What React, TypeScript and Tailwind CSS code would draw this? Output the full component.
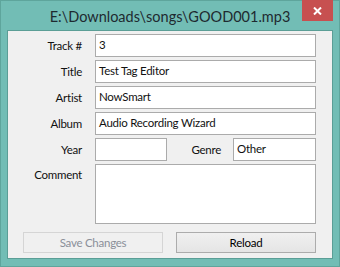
import React from 'react';

const FONT = "font-['Lato',sans-serif]";

function Field({ label, value, tall }: { label: string; value?: string; tall?: boolean }) {
  return (
    <div className="flex">
      <div className={`w-[74px] text-right ${tall ? 'pt-[2px]' : 'leading-[23px]'}`}>{label}</div>
      <div
        className={`ml-[13px] w-[221px] border border-[#ababab] bg-white pl-[3px] ${tall ? 'h-[60px]' : 'h-[23px] leading-[20px]'}`}
      >
        {value}
      </div>
    </div>
  );
}

export default function App() {
  return (
    <div className={`${FONT} relative w-[340px] h-[267px] border border-[#5ea59c] bg-[#72bdb5] px-[6px] text-[11.5px] tracking-[-0.25px] text-[#111]`}>
      <div className="h-[29px] flex items-center justify-center text-[14.5px] tracking-normal text-[#1e2a30] pt-[2px] -mx-[6px]">
        E:\Downloads\songs\GOOD001.mp3
      </div>
      <div className="absolute top-[-1px] right-[6px] w-[31px] h-[21px] bg-[#c75050] flex items-center justify-center">
        <svg width="9" height="8" viewBox="0 0 9 8">
          <path d="M1 0.5 L8 7.5 M8 0.5 L1 7.5" stroke="white" strokeWidth="2" />
        </svg>
      </div>
      <div className="h-[229px] border border-[#5b9e96] bg-[#f0f0f0] pt-[3px] flex flex-col">
        <div className="flex flex-col gap-[3px]">
          <Field label="Track #" value="3" />
          <Field label="Title" value="Test Tag Editor" />
          <Field label="Artist" value="NowSmart" />
          <Field label="Album" value="Audio Recording Wizard" />
          <div className="flex">
            <div className="w-[74px] text-right leading-[23px]">Year</div>
            <div className="ml-[13px] w-[72px] h-[23px] border border-[#ababab] bg-white" />
            <div className="flex-1 text-right pr-[12px] leading-[23px]">Genre</div>
            <div className="w-[83px] h-[23px] border border-[#ababab] bg-white pl-[3px] leading-[20px] mr-[16px]">Other</div>
          </div>
          <Field label="Comment" tall />
        </div>
        <div className="flex gap-[13px] pl-[15px] mt-[8px]">
          <button className="w-[140px] h-[21px] border border-[#d5d5d5] bg-[#f0f0f0] text-[#8a8f99] leading-[18px]">
            Save Changes
          </button>
          <button className="w-[140px] h-[21px] border border-[#acacac] bg-gradient-to-b from-[#f0f0f0] to-[#e5e5e5] text-black leading-[18px]">
            Reload
          </button>
        </div>
      </div>
    </div>
  );
}
